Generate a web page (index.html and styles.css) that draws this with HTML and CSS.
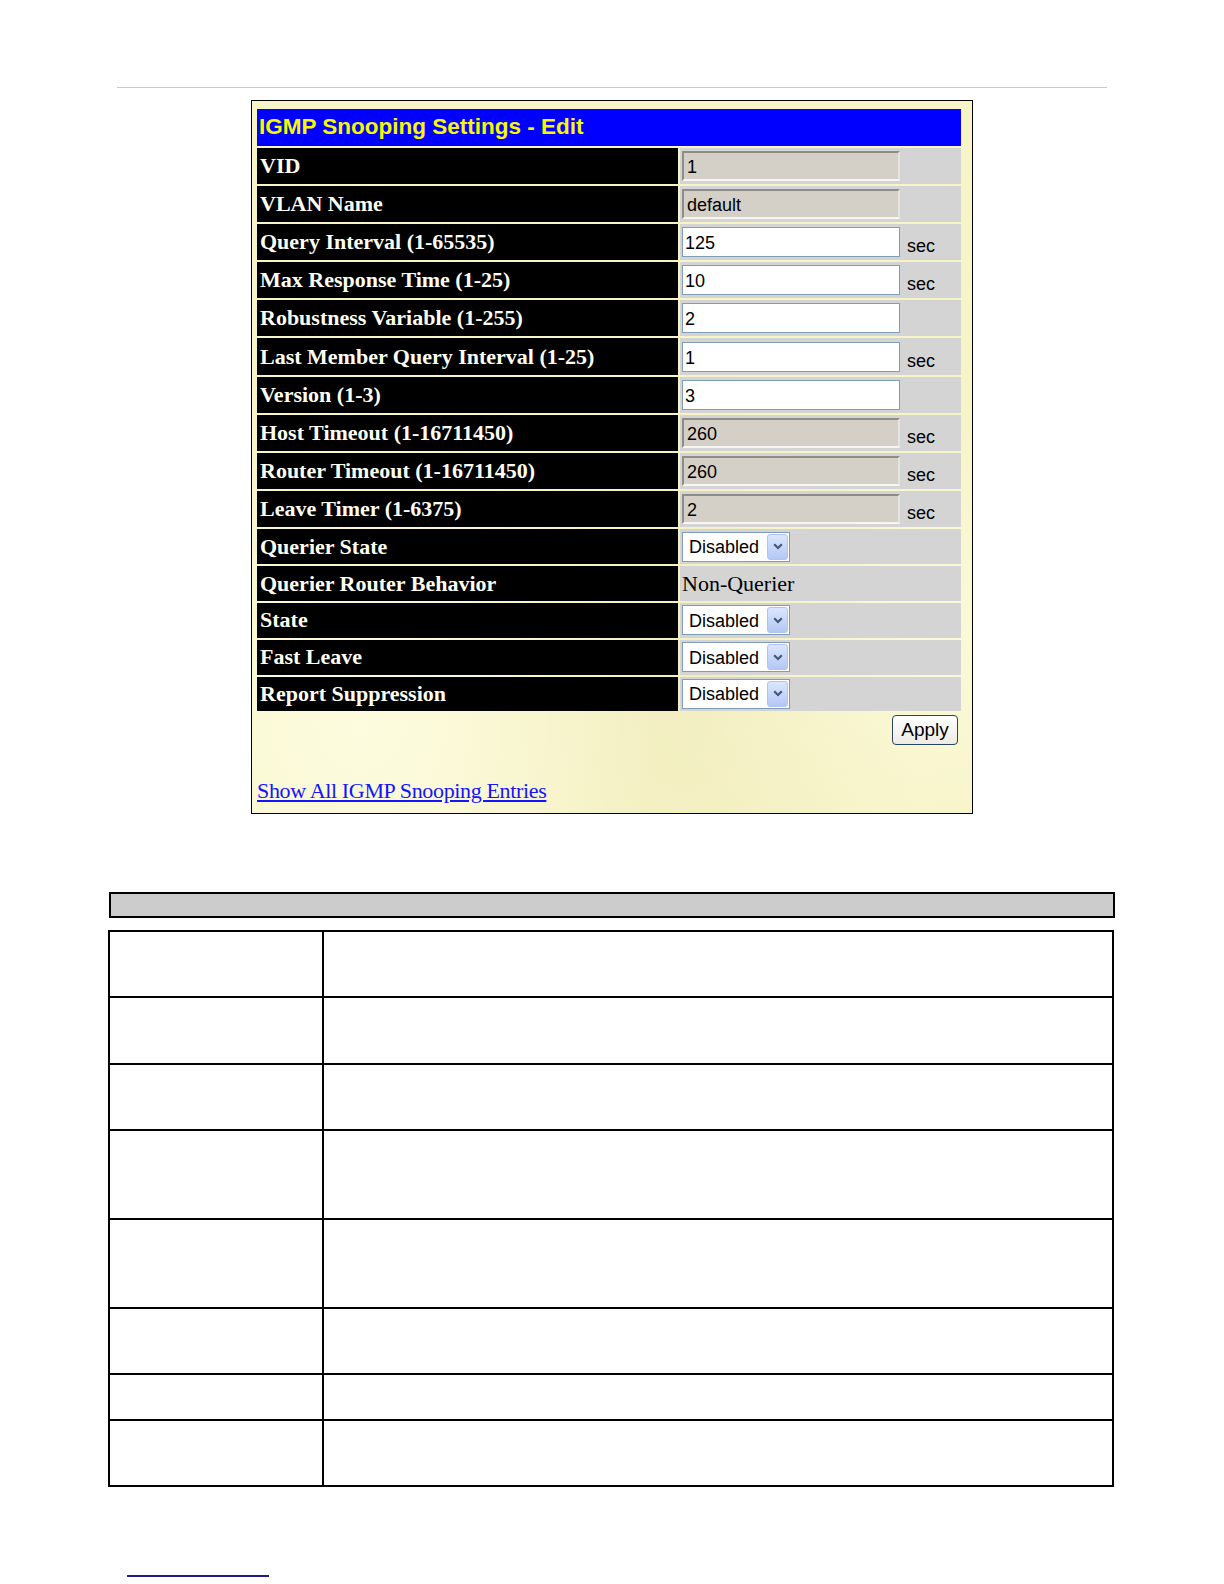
FILE: index.html
```html
<!DOCTYPE html>
<html lang="en">
<head>
    <meta charset="UTF-8">
    <title>IGMP Snooping Settings - Edit</title>
    <link rel="stylesheet" href="styles.css">
</head>
<body>
    <div class="page-rule"></div>

    <div class="panel">
        <table class="settings">
            <tr>
                <th colspan="2" class="title">IGMP Snooping Settings - Edit</th>
            </tr>
            <tr class="text-row">
                <td class="label">VID</td>
                <td class="value"><div class="field"><span class="input disabled">1</span></div></td>
            </tr>
            <tr class="text-row">
                <td class="label">VLAN Name</td>
                <td class="value"><div class="field"><span class="input disabled">default</span></div></td>
            </tr>
            <tr class="text-row">
                <td class="label">Query Interval (1-65535)</td>
                <td class="value"><div class="field"><span class="input">125</span><span class="unit">sec</span></div></td>
            </tr>
            <tr class="text-row">
                <td class="label">Max Response Time (1-25)</td>
                <td class="value"><div class="field"><span class="input">10</span><span class="unit">sec</span></div></td>
            </tr>
            <tr class="text-row">
                <td class="label">Robustness Variable (1-255)</td>
                <td class="value"><div class="field"><span class="input">2</span></div></td>
            </tr>
            <tr class="text-row">
                <td class="label">Last Member Query Interval (1-25)</td>
                <td class="value"><div class="field"><span class="input">1</span><span class="unit">sec</span></div></td>
            </tr>
            <tr class="text-row">
                <td class="label">Version (1-3)</td>
                <td class="value"><div class="field"><span class="input">3</span></div></td>
            </tr>
            <tr class="text-row">
                <td class="label">Host Timeout (1-16711450)</td>
                <td class="value"><div class="field"><span class="input disabled">260</span><span class="unit">sec</span></div></td>
            </tr>
            <tr class="text-row">
                <td class="label">Router Timeout (1-16711450)</td>
                <td class="value"><div class="field"><span class="input disabled">260</span><span class="unit">sec</span></div></td>
            </tr>
            <tr class="text-row">
                <td class="label">Leave Timer (1-6375)</td>
                <td class="value"><div class="field"><span class="input disabled">2</span><span class="unit">sec</span></div></td>
            </tr>
            <tr class="select-row">
                <td class="label">Querier State</td>
                <td class="value">
                    <div class="select"><span>Disabled</span><span class="arrow"><svg width="10" height="7" viewBox="0 0 10 7"><path d="M1.2 1.3 L5 5 L8.8 1.3" fill="none" stroke="#43577d" stroke-width="2.2"/></svg></span></div>
                </td>
            </tr>
            <tr class="select-row">
                <td class="label">Querier Router Behavior</td>
                <td class="value plain">Non-Querier</td>
            </tr>
            <tr class="select-row">
                <td class="label">State</td>
                <td class="value">
                    <div class="select"><span>Disabled</span><span class="arrow"><svg width="10" height="7" viewBox="0 0 10 7"><path d="M1.2 1.3 L5 5 L8.8 1.3" fill="none" stroke="#43577d" stroke-width="2.2"/></svg></span></div>
                </td>
            </tr>
            <tr class="select-row">
                <td class="label">Fast Leave</td>
                <td class="value">
                    <div class="select"><span>Disabled</span><span class="arrow"><svg width="10" height="7" viewBox="0 0 10 7"><path d="M1.2 1.3 L5 5 L8.8 1.3" fill="none" stroke="#43577d" stroke-width="2.2"/></svg></span></div>
                </td>
            </tr>
            <tr class="select-row">
                <td class="label">Report Suppression</td>
                <td class="value">
                    <div class="select"><span>Disabled</span><span class="arrow"><svg width="10" height="7" viewBox="0 0 10 7"><path d="M1.2 1.3 L5 5 L8.8 1.3" fill="none" stroke="#43577d" stroke-width="2.2"/></svg></span></div>
                </td>
            </tr>
        </table>

        <div class="actions">
            <button class="apply">Apply</button>
        </div>

        <a href="#" class="entries-link">Show All IGMP Snooping Entries</a>
    </div>

    <div class="desc-head"></div>

    <table class="desc">
        <tr class="r66"><td class="param"></td><td></td></tr>
        <tr class="r66b"><td class="param"></td><td></td></tr>
        <tr class="r66b"><td class="param"></td><td></td></tr>
        <tr class="r88"><td class="param"></td><td></td></tr>
        <tr class="r89"><td class="param"></td><td></td></tr>
        <tr class="r66"><td class="param"></td><td></td></tr>
        <tr class="r46"><td class="param"></td><td></td></tr>
        <tr class="r66"><td class="param"></td><td></td></tr>
    </table>

    <div class="footer-rule"></div>
</body>
</html>
```

FILE: styles.css
```css
/* Page */
body {
    margin: 0;
    padding: 0;
    background: #ffffff;
    font-family: 'Liberation Sans', Arial, sans-serif;
    color: #000;
}

.page-rule {
    margin: 87px 0 0 117px;
    width: 990px;
    height: 1px;
    background: #cacaca;
}

/* Settings panel */
.panel {
    margin: 12px 0 0 251px;
    width: 722px;
    height: 714px;
    border: 1px solid #000;
    background-color: #f7f4c8;
    background-image:
        radial-gradient(ellipse at 15% 88%, rgba(255, 255, 232, 0.7), transparent 35%),
        radial-gradient(ellipse at 60% 85%, rgba(236, 231, 182, 0.45), transparent 40%),
        radial-gradient(ellipse at 90% 75%, rgba(255, 255, 230, 0.6), transparent 30%);
    box-sizing: border-box;
    padding: 6px 9px 0 3px;
}

.settings {
    border-spacing: 2px;
    width: 708px;
}

.settings td,
.settings th {
    padding: 0;
}

.settings .title {
    height: 36.5px;
    background: #0000ff;
    color: #f8f800;
    font-family: 'Liberation Sans', Arial, sans-serif;
    font-weight: bold;
    font-size: 22.5px;
    text-align: left;
    padding-left: 2px;
}

.settings .label {
    width: 421px;
    box-sizing: border-box;
    background: #000;
    color: #fffff4;
    font-family: 'Liberation Serif', 'Times New Roman', serif;
    font-weight: bold;
    font-size: 22px;
    padding-left: 3px;
}

.settings .value {
    background: #d4d4d4;
    padding-left: 2px;
}

.text-row td {
    height: 36.2px;
}

.select-row td {
    height: 34.8px;
}

.field {
    display: flex;
    align-items: center;
}

.input {
    display: block;
    width: 218px;
    height: 30px;
    box-sizing: border-box;
    background: #fff;
    border: 1px solid #7f9db9;
    font-size: 18px;
    line-height: 25px;
    padding: 3px 0 0 2px;
}

.input.disabled {
    background: #d4d0c8;
    border-top: 2px solid #8e8c86;
    border-left: 2px solid #8e8c86;
    border-bottom: 2px solid #f6f6f2;
    border-right: 2px solid #e6e4de;
    line-height: 24px;
    padding: 2px 0 0 3px;
}

.unit {
    align-self: flex-end;
    font-size: 18px;
    margin-left: 7px;
}

.select {
    display: flex;
    align-items: center;
    justify-content: space-between;
    width: 108px;
    height: 30px;
    box-sizing: border-box;
    background: #fff;
    border: 1px solid #7f9db9;
    font-size: 18px;
    padding: 2px 1px 0 6px;
}

.select .arrow {
    display: flex;
    align-items: center;
    justify-content: center;
    width: 21px;
    height: 26px;
    margin-top: -2px;
    border-radius: 3px;
    border: 1px solid #b3c4ec;
    background: linear-gradient(#dbe6fe, #b4c8f6);
    box-sizing: border-box;
}

.value.plain {
    font-family: 'Liberation Serif', 'Times New Roman', serif;
    font-size: 22px;
}

.actions {
    display: flex;
    justify-content: flex-end;
    width: 708px;
    box-sizing: border-box;
    padding: 2px 5px 0 0;
}

.apply {
    width: 66px;
    height: 30px;
    font-family: 'Liberation Sans', Arial, sans-serif;
    font-size: 19px;
    color: #000;
    background: linear-gradient(#ffffff, #ecebe4);
    border: 1px solid #2a4560;
    border-radius: 4px;
    padding: 0;
}

.entries-link {
    display: inline-block;
    margin: 33px 0 0 2px;
    font-family: 'Liberation Serif', 'Times New Roman', serif;
    font-size: 22px;
    letter-spacing: -0.35px;
    color: #1414ff;
}

/* Description table */
.desc-head {
    margin: 78px 0 0 109px;
    width: 1006px;
    height: 26px;
    box-sizing: border-box;
    border: 2px solid #000;
    background: #cccccc;
}

.desc {
    margin: 12px 0 0 108px;
    width: 1006px;
    border-collapse: collapse;
    border: 2px solid #000;
}

.desc td {
    border: 2px solid #000;
    padding: 0;
}

.desc .param {
    width: 212px;
}

.desc .r66 td { height: 64px; }
.desc .r66b td { height: 64.5px; }
.desc .r88 td { height: 86.5px; }
.desc .r89 td { height: 87px; }
.desc .r46 td { height: 44px; }

.footer-rule {
    margin: 88px 0 0 127px;
    width: 142px;
    height: 2px;
    background: #1c1c8c;
}
```
